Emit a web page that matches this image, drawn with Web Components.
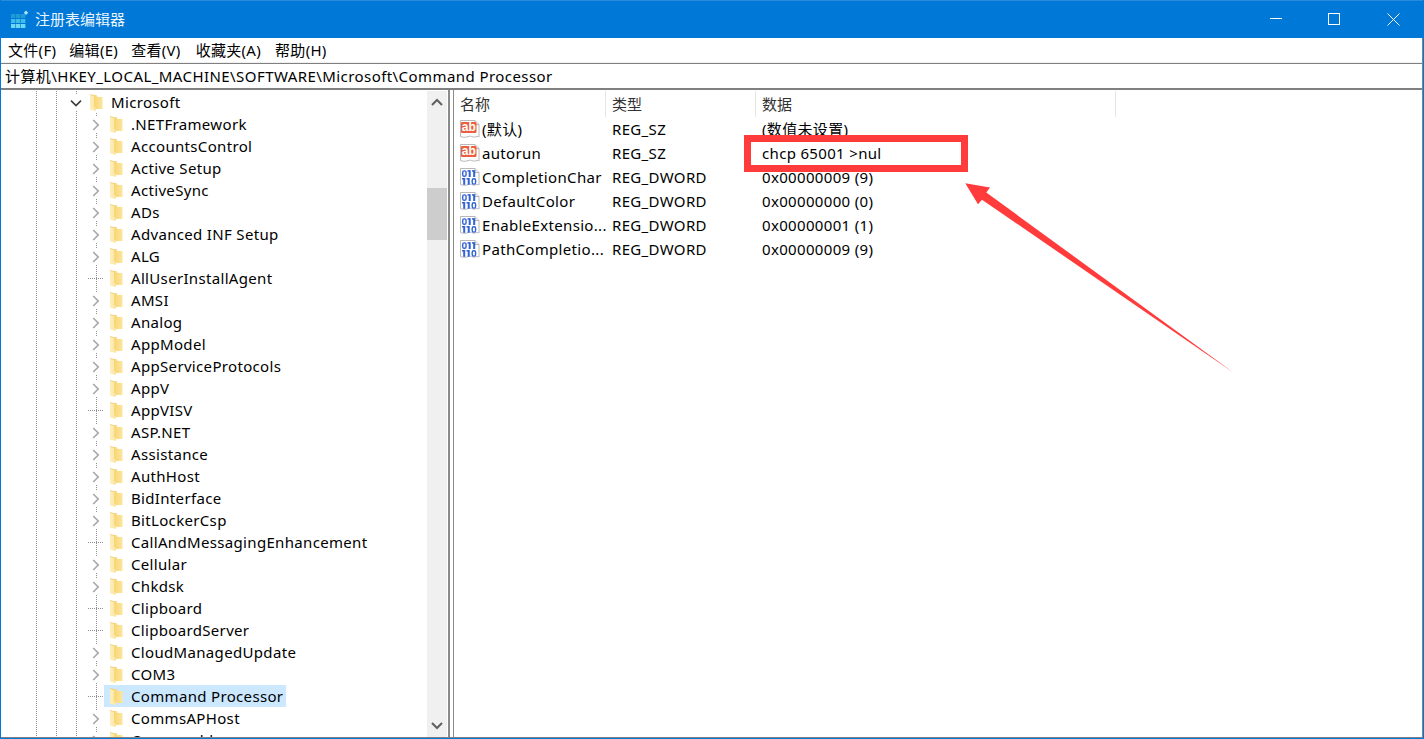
<!DOCTYPE html>
<html lang="zh-CN"><head><meta charset="utf-8"><title>注册表编辑器</title>
<style>
html,body{margin:0;padding:0;background:#fff;overflow:hidden}
body{font:15px/20px "Noto Sans","Noto Sans CJK SC",sans-serif;color:#000}
</style></head><body>
<reg-window></reg-window>
<script>
const FONT='"Noto Sans","Noto Sans CJK SC",sans-serif';
class Base extends HTMLElement{
  constructor(){super();this.attachShadow({mode:'open'});}
}
class RegTitlebar extends Base{connectedCallback(){this.shadowRoot.innerHTML=`<style>
:host{display:flex;align-items:center;height:37px;background:#0078d7;color:#fff;border-top:1px solid #2a8bdc;flex:none;padding-right:1px;letter-spacing:0}
.ic{margin:0 0 2px 9px;width:20px;height:20px;flex:none;display:block}
.t{margin:0 0 2px 5px;font-size:15px;flex:1;color:#eaf4fc}
.b{width:58px;height:37px;box-sizing:border-box;padding-bottom:1px;display:flex;align-items:center;justify-content:center;flex:none}
svg{display:block}
</style>
<svg class="ic" viewBox="0 0 20 20"><rect x="1" y="5" width="4.4" height="4" fill="#1f9ad6"/><rect x="6" y="5" width="4.4" height="4" fill="#1f9ad6"/><rect x="11" y="5" width="4.4" height="4" fill="#1f9ad6"/><rect x="1" y="10" width="4.4" height="4" fill="#3dbce8"/><rect x="6" y="10" width="4.4" height="4" fill="#3dbce8"/><rect x="11" y="10" width="4.4" height="4" fill="#3dbce8"/><rect x="1" y="15" width="4.4" height="4" fill="#6cd8f2"/><rect x="6" y="15" width="4.4" height="4" fill="#6cd8f2"/><rect x="11" y="15" width="4.4" height="4" fill="#6cd8f2"/><path d="M16 1.5l2.2 2.2L16 5.9l-2.2-2.2z" fill="#a8e4f6"/></svg>
<span class="t">注册表编辑器</span>
<div class="b"><svg width="12" height="12"><rect x="0" y="5" width="12" height="1" fill="#fff"/></svg></div>
<div class="b"><svg width="12" height="12"><rect x=".5" y=".5" width="11" height="11" fill="none" stroke="#fff"/></svg></div>
<div class="b" style="margin-left:1px"><svg width="13" height="13"><path d="M.5.5l12 12M12.5.5l-12 12" stroke="#fff" fill="none"/></svg></div>`}}
class RegMenubar extends Base{connectedCallback(){this.shadowRoot.innerHTML=`<style>
:host{display:flex;height:23px;padding-bottom:1px;background:#fff;align-items:center;flex:none;border-bottom:1px solid #f0f0f0;font-size:15px;letter-spacing:.3px}
</style><slot></slot>`}}
class RegMenu extends Base{connectedCallback(){this.shadowRoot.innerHTML=`<style>:host{display:block;white-space:nowrap}</style><slot></slot>`}}
class RegAddress extends Base{connectedCallback(){this.shadowRoot.innerHTML=`<style>
:host{display:flex;align-items:center;height:24px;padding-left:4px;background:#fff;border-top:1px solid #808080;border-bottom:2px solid #808080;flex:none;white-space:nowrap;font-size:15px;letter-spacing:.43px}
</style><slot></slot>`}}
const chevR=`<svg width="16" height="16" viewBox="0 0 16 16"><path d="M5.2 3l5 5-5 5" fill="none" stroke="#a8a8a8" stroke-width="1.7"/></svg>`;
const chevD=`<svg width="16" height="16" viewBox="0 0 16 16"><path d="M3 5.6l5 5 5-5" fill="none" stroke="#404040" stroke-width="1.7"/></svg>`;
const folder=`<svg width="13" height="17" viewBox="0 0 13 17"><defs><linearGradient id="f" x1="0" y1="0" x2="1" y2="0"><stop offset="0" stop-color="#fdeebc"/><stop offset="1" stop-color="#fbe59f"/></linearGradient><linearGradient id="g" x1="0" y1="0" x2="1" y2="0"><stop offset="0" stop-color="#f7d472"/><stop offset="1" stop-color="#fce59c"/></linearGradient></defs><path d="M3 1h3.5l1 2H12.5V15H3z" fill="url(#g)"/><path d="M0 .5L4 1.5V12.5L6 15V17L0 15.5z" fill="url(#f)"/><path d="M0 .5L4 1.5" stroke="#e8bd5a" fill="none" stroke-width=".6"/></svg>`;
class RegItem extends Base{connectedCallback(){
  const k=this.getAttribute('kind')||'closed',sel=this.hasAttribute('selected');
  const ch=k==='open'?chevD:k==='closed'?chevR:'';
  this.shadowRoot.innerHTML=`<style>
:host{display:flex;height:22px;align-items:center;white-space:nowrap;font-size:15px}
.c{width:16px;height:16px;flex:none;background:#fff;margin-top:2px;${k==='leaf'?'background:none;height:1px;margin-top:0;background-image:linear-gradient(90deg,#909090 1px,transparent 1px);background-size:2px 1px;background-position:8px 0;background-repeat:repeat-x;':''}}
.c svg{display:block}
.e{display:flex;align-items:center;height:22px;background:${sel?'#cce8ff':'transparent'}}
.f{width:13px;height:17px;margin-left:6px;flex:none}
.f svg{display:block}
.l{margin-left:8px;padding-right:3px}
</style><div class="c">${ch}</div><div class="e"><div class="f">${folder}</div><div class="l"><slot></slot></div></div>`}}
class RegScrollbar extends Base{connectedCallback(){this.shadowRoot.innerHTML=`<style>
:host{display:flex;flex-direction:column;width:20px;flex:none;background:#f0f0f0}
.a{height:22px;flex:none;display:flex;align-items:center;justify-content:center}
.s{height:75px;flex:none}.th{height:52px;background:#cdcdcd;flex:none}.r{flex:1}
svg{display:block}
</style><div class="a"><svg width="12" height="8"><path d="M1 7l5-5 5 5" fill="none" stroke="#606060" stroke-width="2"/></svg></div><div class="s"></div><div class="th"></div><div class="r"></div><div class="a"><svg width="12" height="8"><path d="M1 1l5 5 5-5" fill="none" stroke="#606060" stroke-width="2"/></svg></div>`}}
const dots=x=>`linear-gradient(#909090 1px,transparent 1px) ${x}px 0/1px 2px repeat-y`;
class RegTree extends Base{connectedCallback(){this.shadowRoot.innerHTML=`<style>
:host{display:flex;width:447px;flex:none;background:#fff;box-sizing:border-box;padding-top:1px;padding-right:1px;overflow:hidden}
.v{flex:1;overflow:hidden;background:${dots(35)},${dots(55)},${dots(75)}}
.root{margin-left:67px}
.kids{margin-top:0;margin-left:20px;background:${dots(8)}}
</style><div class="v"><div class="root"><slot name="root"></slot><div class="kids"><slot></slot></div></div></div><reg-scrollbar></reg-scrollbar>`}}
class RegSplitter extends Base{connectedCallback(){this.shadowRoot.innerHTML=`<style>
:host{display:block;flex:none;width:3px;height:100%;background:#fff;border-left:2px solid #8a8a8a;border-right:1px solid #8a8a8a}
</style>`}}
class RegList extends Base{connectedCallback(){this.shadowRoot.innerHTML=`<style>
:host{display:block;flex:1;background:#fff;padding-top:1px;overflow:hidden;min-width:0}
</style><slot></slot>`}}
const gridCols='grid-template-columns:152px 150px 360px';
class RegHeader extends Base{connectedCallback(){this.shadowRoot.innerHTML=`<style>
:host{display:grid;${gridCols};height:26px;font-size:15px;color:#333;letter-spacing:0}
div{display:flex;align-items:center;padding:0 0 0 6px;border-right:1px solid #e5e5e5;box-sizing:border-box}
div:first-child{padding-left:9px}
</style><div>名称</div><div>类型</div><div>数据</div>`}}
const page=(inner)=>`<svg width="20" height="20" viewBox="0 0 20 20" style="display:block;flex:none"><path d="M.5 1.5H15l4 4V18c-2-1.6-4 .8-6 0s-3-1.2-5-.4-4 1-7.5 0z" fill="#fff" stroke="#b8b8b8"/><path d="M15 1.5V5.5H19" fill="#eee" stroke="#b8b8b8"/>${inner}</svg>`;
const icoAb=page(`<rect x="1" y="3" width="15.5" height="11" rx="1" fill="#e9613f"/><text x="8.8" y="12.4" text-anchor="middle" font-family="Liberation Sans" font-weight="700" font-size="12" letter-spacing="0" fill="#fff">ab</text>`);
const bit0=(x,y)=>`<rect x="${x+.7}" y="${y+.7}" width="3.4" height="5.4" rx="1.6" fill="none" stroke="#2f62d8" stroke-width="1.4"/>`;
const bit1=(x,y)=>`<rect x="${x+1.2}" y="${y}" width="2" height="6.8" fill="#2f62d8"/><rect x="${x}" y="${y}" width="2" height="1.5" fill="#2f62d8"/>`;
const icoBin=page(bit0(2,3.2)+bit1(7.5,3.2)+bit1(12,3.2)+bit1(2,11)+bit1(6.5,11)+bit0(11.5,11));
class RegRow extends Base{connectedCallback(){
  const ic=this.getAttribute('type')==='REG_SZ'?icoAb:icoBin;
  this.shadowRoot.innerHTML=`<style>
:host{display:grid;${gridCols};height:24px;align-items:center;white-space:nowrap;font-size:15px}
.n{display:flex;align-items:center;padding-left:6px;gap:2px;overflow:hidden}
.t,.d{padding-left:6px}
</style><div class="n">${ic}<span>${this.getAttribute('name')}</span></div><div class="t">${this.getAttribute('type')}</div><div class="d"><slot></slot></div>`}}
class RegAnnotation extends Base{connectedCallback(){this.shadowRoot.innerHTML=`<style>
:host{position:absolute;left:0;top:0;width:1424px;height:739px;pointer-events:none}
svg{display:block}
</style><svg width="1424" height="739"><rect x="746.5" y="138.5" width="217" height="30" fill="none" stroke="#ff3b3b" stroke-width="7"/><path d="M964.3 183.3L989 187.5 985.3 192.5 1233 373 981 199.7 977 204.3z" fill="#ff3b3b"/></svg>`}}
class RegWindow extends Base{connectedCallback(){
  const items=['.NETFramework','AccountsControl','Active Setup','ActiveSync','ADs','Advanced INF Setup','ALG','*AllUserInstallAgent','AMSI','Analog','AppModel','AppServiceProtocols','AppV','*AppVISV','ASP.NET','Assistance','AuthHost','BidInterface','BitLockerCsp','*CallAndMessagingEnhancement','Cellular','Chkdsk','*Clipboard','*ClipboardServer','CloudManagedUpdate','COM3','#Command Processor','CommsAPHost','Composable'];
  const tree=items.map(s=>{const leaf=/^[*#]/.test(s);const sel=s[0]==='#';return `<reg-item kind="${leaf?'leaf':'closed'}"${sel?' selected':''}>${leaf?s.slice(1):s}</reg-item>`}).join('');
  const rows=[['(默认)','REG_SZ','(数值未设置)'],['autorun','REG_SZ','chcp 65001 >nul'],['CompletionChar','REG_DWORD','0x00000009 (9)'],['DefaultColor','REG_DWORD','0x00000000 (0)'],['EnableExtensio...','REG_DWORD','0x00000001 (1)'],['PathCompletio...','REG_DWORD','0x00000009 (9)']];
  this.shadowRoot.innerHTML=`<style>
:host{display:flex;flex-direction:column;position:relative;width:1424px;height:739px;box-sizing:border-box;background:#fff;border:1px solid #0078d7;border-top:0;overflow:hidden;font-family:${FONT};letter-spacing:.33px}
.in{display:flex;flex-direction:column;flex:1;min-height:0;border-right:1px solid #808080;border-bottom:1px solid #808080}
.m{display:flex;flex:1;min-height:0}
reg-menu{margin-left:7px}
</style>
<reg-titlebar></reg-titlebar>
<div class="in">
<reg-menubar><reg-menu>文件(F)</reg-menu><reg-menu style="margin-left:13px">编辑(E)</reg-menu><reg-menu style="margin-left:13px">查看(V)</reg-menu><reg-menu style="margin-left:15px">收藏夹(A)</reg-menu><reg-menu style="margin-left:14px">帮助(H)</reg-menu></reg-menubar>
<reg-address>计算机\\HKEY_LOCAL_MACHINE\\SOFTWARE\\Microsoft\\Command Processor</reg-address>
<div class="m"><reg-tree><reg-item slot="root" kind="open">Microsoft</reg-item>${tree}</reg-tree><reg-splitter></reg-splitter>
<reg-list><reg-header></reg-header>${rows.map(r=>`<reg-row name="${r[0]}" type="${r[1]}">${r[2].replace('>','&gt;')}</reg-row>`).join('')}</reg-list></div>
</div>
<reg-annotation></reg-annotation>`}}
for(const [n,c] of Object.entries({'reg-titlebar':RegTitlebar,'reg-menubar':RegMenubar,'reg-menu':RegMenu,'reg-address':RegAddress,'reg-item':RegItem,'reg-scrollbar':RegScrollbar,'reg-tree':RegTree,'reg-splitter':RegSplitter,'reg-list':RegList,'reg-header':RegHeader,'reg-row':RegRow,'reg-annotation':RegAnnotation,'reg-window':RegWindow}))customElements.define(n,c);
</script></body></html>
